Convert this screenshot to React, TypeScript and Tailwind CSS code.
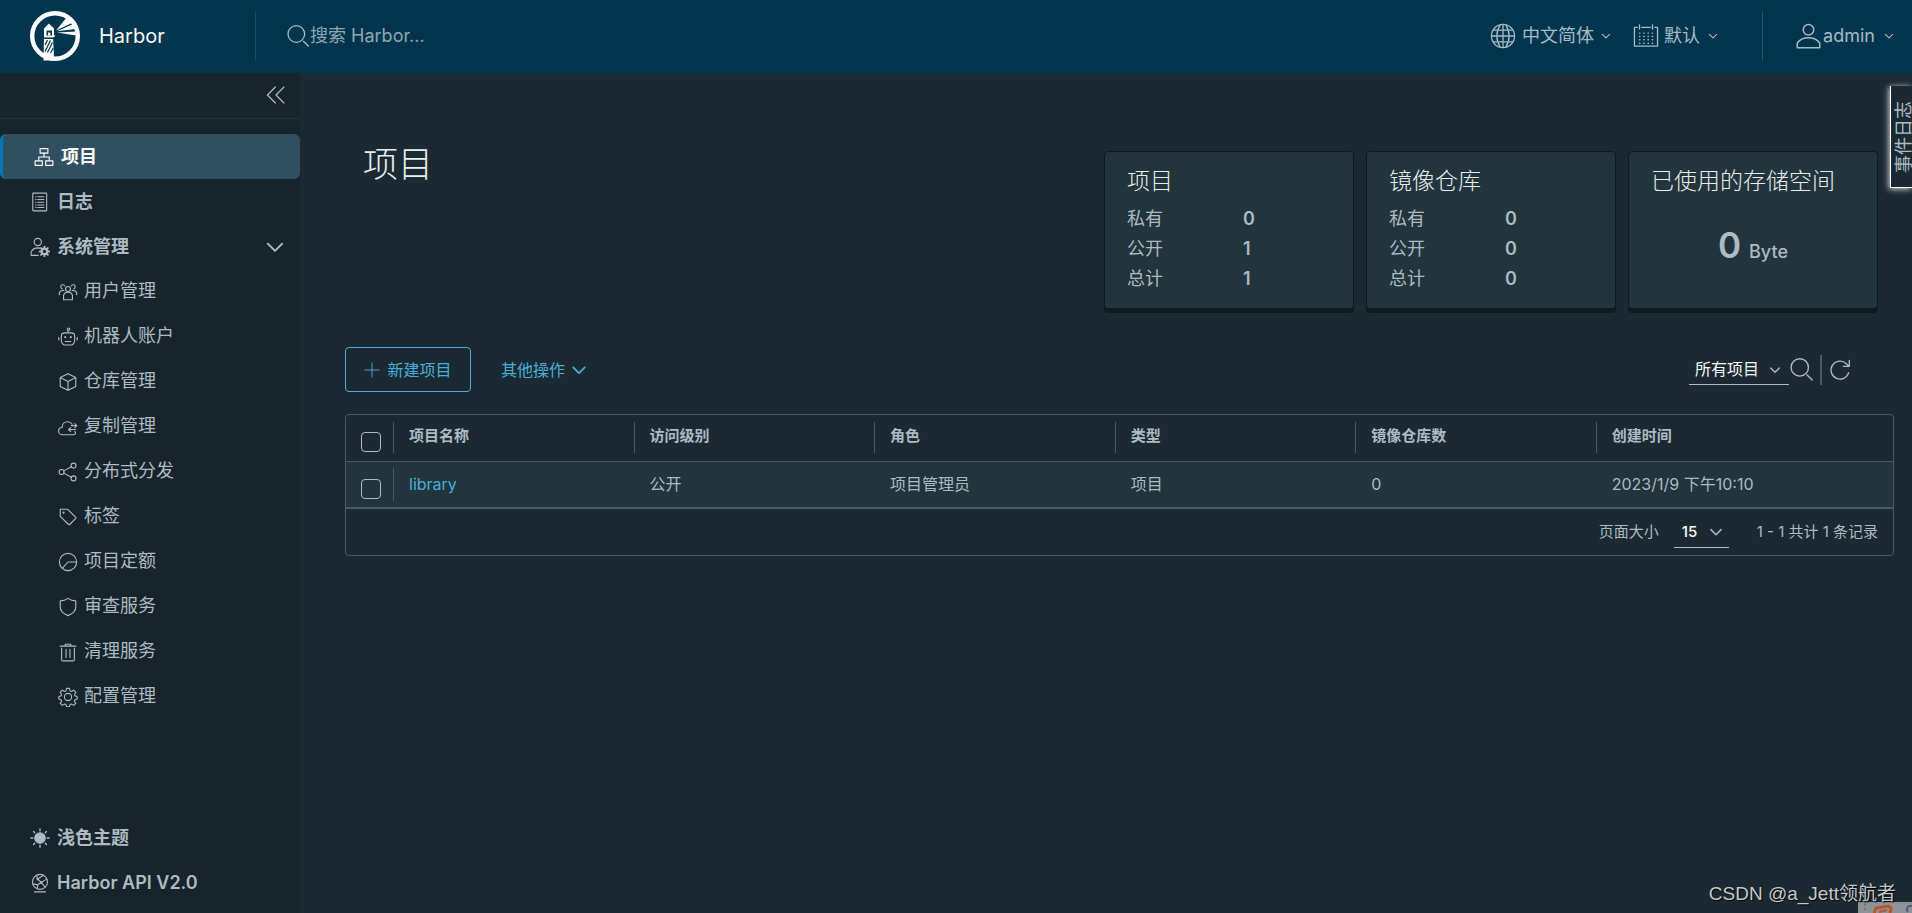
import type { ReactNode } from "react";

type IconProps = { className?: string; sw?: number; children?: ReactNode };

function Svg({ className = "size-5", sw = 2, children }: IconProps) {
  return (
    <svg
      viewBox="0 0 36 36"
      className={`shrink-0 ${className}`}
      fill="none"
      stroke="currentColor"
      strokeWidth={sw}
      strokeLinecap="round"
      strokeLinejoin="round"
      aria-hidden="true"
    >
      {children}
    </svg>
  );
}

const Chevron = ({ className, sw = 3 }: IconProps) => (
  <Svg className={className} sw={sw}>
    <path d="M5 12l13 13 13-13" />
  </Svg>
);

const SearchIcon = ({ className }: IconProps) => (
  <Svg className={className}>
    <circle cx="15.5" cy="15" r="12.5" />
    <path d="M26 26l7.5 7" />
  </Svg>
);

const icons = {
  projects: (
    <Svg>
      <rect x="11" y="3" width="14" height="8" />
      <rect x="2" y="25" width="13" height="8" />
      <rect x="21" y="25" width="13" height="8" />
      <path d="M18 11v7M8.5 24v-6h19v6" />
    </Svg>
  ),
  logs: (
    <Svg>
      <rect x="5" y="2" width="25" height="32" rx="1" />
      <path d="M10 8.500h1M10 13.500h1M10 18.500h1M10 23.500h1M10 28h1M14 8.500h11M14 13.500h11M14 18.500h11M14 23.500h11M14 28h11" />
    </Svg>
  ),
  admin: (
    <Svg>
      <circle cx="14" cy="9" r="6.500" />
      <path d="M15 33H2v-6c2.500-5 7-7.500 12-7.500l4 .5" />
      <circle cx="26" cy="26" r="5" strokeWidth="4" />
      <path d="M26 18.500v-1M26 34.500v-1M18.500 26h-1M34.500 26h-1M20.700 20.700l-.7-.7M31.300 31.300l.7.7M20.700 31.300l-.7.7M31.300 20.700l.7-.7" strokeWidth="3.500" />
    </Svg>
  ),
  users: (
    <Svg>
      <circle cx="18" cy="12.500" r="4.500" />
      <path d="M10 32v-8c1-4 4-5.500 8-5.500s7 1.500 8 5.500v8z" />
      <path d="M12 7c-1-3-7-3-7 1.500 0 2 1 3.500 3 4M24 7c1-3 7-3 7 1.500 0 2-1 3.500-3 4M2.500 23v-4c1-2.500 4-4 8-3.500M33.500 23v-4c-1-2.500-4-4-8-3.500" />
    </Svg>
  ),
  robot: (
    <Svg>
      <circle cx="19" cy="4" r="2.200" />
      <path d="M18 6.500V10M12 10.500h12c4 0 6 3 6 6v8c0 4-3 8-7 8H13c-4 0-7-4-7-8v-8c0-3 2-6 6-6zM1.500 18.500v5M34.500 18.500v5M13 26h10" />
      <path d="M13 18v.5M23 18v.5" strokeWidth="3.500" />
    </Svg>
  ),
  registry: (
    <Svg>
      <path d="M18 3l14 7v16l-14 7-14-7V10zM4 10l14 7 14-7M18 17v16" />
    </Svg>
  ),
  replication: (
    <Svg>
      <path d="M30 26c2.500 1.500 2 6-2 6H8c-4 0-7-3-7-6.500S4 19 7.500 18.500C7.500 12 12 8.500 17 8.500c4 0 7 2 8.500 4.500" />
      <path d="M24 15.500h9.500M30 12l4 3.500-4 3.500M32 22.500H19.500M23 19l-4 3.500 4 3.500" />
    </Svg>
  ),
  distribution: (
    <Svg>
      <circle cx="6.500" cy="18" r="4.500" />
      <circle cx="28" cy="6.500" r="4.500" />
      <circle cx="28" cy="29.500" r="4.500" />
      <path d="M10.500 16l13.500-7.500M10.500 20L24 27.500" />
    </Svg>
  ),
  tag: (
    <Svg>
      <path d="M4 4h13l15 14.500c1 1 1 1 0 2L21 31.500c-1 1-1 1-2 0L4 17z" />
      <circle cx="10" cy="10" r="1" />
    </Svg>
  ),
  quota: (
    <Svg>
      <circle cx="18" cy="18" r="15.500" />
      <path d="M33 18H18L8 29" />
    </Svg>
  ),
  shield: (
    <Svg>
      <path d="M18 2.500c4 3 9 4.500 14 4.500v11c0 7-5 12-14 15.500C9 30 4 25 4 18V7c5 0 10-1.500 14-4.500z" />
    </Svg>
  ),
  trash: (
    <Svg>
      <path d="M4 7.500h28M13 7V4h10v3M6.500 11v21c0 1 1 2 2 2h19c1 0 2-1 2-2V11M14.500 13v15M21.500 13v15" />
    </Svg>
  ),
  cog: (
    <Svg>
      <circle cx="18" cy="18" r="6.500" />
      <path d="M15.400 2.500h5.200l1.200 4.500 2.600 1.100 4-2.400 3.700 3.700-2.400 4 1.100 2.600 3.700 1v4.500l-3.900 1.300-1.100 2.600 2.500 4-3.700 3.700-4-2.500-2.600 1.100-1.200 3.800h-5l-1.200-3.800-2.600-1.100-4 2.500L4 29.400l2.500-4-1.100-2.600-3.900-1.300V17l3.900-1 1.100-2.600-2.500-4L7.700 5.700l4 2.400L14.300 7z" />
    </Svg>
  ),
  sun: (
    <Svg>
      <circle cx="18" cy="18" r="9.500" fill="currentColor" />
      <path d="M18 1.500v3.500M18 31v3.500M1.500 18H5M31 18h3.500M6.500 6.500l2 2M27.500 27.500l2 2M6.500 29.500l2-2M27.500 8.500l2-2" strokeWidth="2.500" />
    </Svg>
  ),
  api: (
    <Svg>
      <circle cx="18" cy="16" r="13.500" />
      <path d="M8 34h20M12 5l2 6 6 6 7 8M14 11l10-7M5 20l9 1 6-4 10-6M14 21l-1 7" />
      <circle cx="14" cy="11" r="1.500" />
      <circle cx="20" cy="17" r="1.500" />
    </Svg>
  ),
};

const Logo = () => (
  <svg viewBox="0 0 50 50" className="size-[50px] shrink-0" aria-hidden="true">
    <circle cx="25" cy="25" r="22.800" fill="none" stroke="#fff" strokeWidth="4.400" />
    <path fill="#fff" d="M26 19.500L37 6l7 5zM27 20.200l15.500-7 3 4.800zM27 21.500l19-1v4z" />
    <path fill="#fff" d="M19 12.500l5 5V24h.7v2H23l1 20.500-1 3h-9.500L14 26v-8.500z" />
    <path fill="#00364d" d="M16.500 19.500h5.500v5h-5.500z" />
    <path fill="#fff" d="M18 21.500h2.500v3H18z" />
    <path fill="#00364d" d="M14 26.500h10v1.500H14z" />
    <path stroke="#00364d" strokeWidth="1.200" d="M15 34l2.500-5M15 40.500l5.500-11M17.500 41.500l5-10M20.500 42l2.700-5" />
  </svg>
);

const adminItems = [
  { icon: icons.users, label: "用户管理" },
  { icon: icons.robot, label: "机器人账户" },
  { icon: icons.registry, label: "仓库管理" },
  { icon: icons.replication, label: "复制管理" },
  { icon: icons.distribution, label: "分布式分发" },
  { icon: icons.tag, label: "标签" },
  { icon: icons.quota, label: "项目定额" },
  { icon: icons.shield, label: "审查服务" },
  { icon: icons.trash, label: "清理服务" },
  { icon: icons.cog, label: "配置管理" },
];

function Header() {
  return (
    <header className="flex h-[73px] shrink-0 items-center bg-[#00364d] pb-px text-lg text-[#a6bac3]">
      <a href="#home" className="flex w-[255px] items-center gap-[19px] pl-[30px] text-xl text-[#fafafa]">
        <Logo />
        Harbor
      </a>
      <label className="flex h-[50px] flex-1 items-center border-l border-[#1f4e63] pl-[30px]">
        <SearchIcon className="size-6" />
        <input
          type="search"
          aria-label="搜索"
          placeholder="搜索 Harbor..."
          className="w-64 bg-transparent outline-none placeholder:text-[#8fa8b3]"
        />
      </label>
      <div className="flex h-[50px] items-center gap-[22px] border-r border-[#2b566a] pr-[44px]">
        <button type="button" className="flex items-center">
          <Svg className="mr-[6px] size-[26px]" sw={1.8}>
            <circle cx="18" cy="18" r="16" />
            <path d="M18 2v32M2.500 18h31M5 10h26M5 26h26M14 3c-6 9-6 21 0 30M22 3c6 9 6 21 0 30" />
          </Svg>
          中文简体
          <Chevron className="ml-[7px] size-[10px]" sw={4} />
        </button>
        <button type="button" className="flex items-center">
          <Svg className="mr-[5px] size-[26px]" sw={1.8}>
            <path d="M6 6H2v26h32V6h-4M12 6h12M9 2.500v6M27 2.500v6" />
            <path d="M9 14h19M9 18.700h19M9 23.300h19M9 28h19" strokeWidth="2" strokeDasharray="0.500 5.400" />
          </Svg>
          默认
          <Chevron className="ml-[8px] size-[10px]" sw={4} />
        </button>
      </div>
      <button type="button" className="flex items-center pl-[32px] pr-[18px]">
        <Svg className="mr-px size-[27px]">
          <circle cx="18" cy="9" r="7" />
          <path d="M3 33v-6c3-5 9-7.500 15-7.500S30 22 33 27v6z" />
        </Svg>
        admin
        <Chevron className="ml-[9px] size-[10px]" sw={4} />
      </button>
    </header>
  );
}

function Sidebar() {
  return (
    <nav className="flex w-[300px] shrink-0 flex-col bg-[#17242b] pb-2 text-lg text-[#adbbc4]">
      <div className="flex h-[46px] items-center justify-end border-b border-[#22313a] pr-[13px] pb-px">
        <button type="button" aria-label="收起">
          <Svg className="size-[22px]">
            <path d="M17 5L4 18l13 13M31 5L18 18l13 13" />
          </Svg>
        </button>
      </div>
      <a
        href="#projects"
        aria-current="page"
        className="mt-[15px] flex h-[45px] items-center gap-[7px] rounded-md border-l-[3px] border-[#0079b8] bg-[#324f62] pl-[31px] font-bold text-white"
      >
        {icons.projects}
        项目
      </a>
      <a href="#logs" className="flex h-[45px] items-center gap-[7px] pl-[30px] font-bold">
        {icons.logs}
        日志
      </a>
      <button type="button" className="flex h-[45px] items-center gap-[7px] pl-[30px] pr-[15px] font-bold">
        {icons.admin}
        系统管理
        <Chevron className="ml-auto size-5" sw={3.5} />
      </button>
      {adminItems.map((item) => (
        <a key={item.label} href="#admin" className="flex h-[45px] items-center gap-[6px] pl-[58px]">
          {item.icon}
          <span className="pb-[2px]">{item.label}</span>
        </a>
      ))}
      <button type="button" className="mt-auto flex h-[45px] items-center gap-[7px] pl-[30px] font-bold">
        {icons.sun}
        浅色主题
      </button>
      <a href="#api" className="flex h-[45px] items-center gap-[7px] pl-[30px] font-semibold">
        {icons.api}
        Harbor API V2.0
      </a>
    </nav>
  );
}

function Card({ title, children }: { title: string; children: ReactNode }) {
  return (
    <section className="h-[158px] w-[250px] rounded border border-[#10191e] bg-[#22343c] px-[22px] pt-[11px] shadow-[0_4px_0_#10191e]">
      <h2 className="text-[23px] leading-9 font-light whitespace-nowrap text-[#eaedf0]">{title}</h2>
      {children}
    </section>
  );
}

function Counts({ values }: { values: number[] }) {
  return (
    <dl className="mt-[5px] grid grid-cols-[116px_1fr] text-lg leading-[30px]">
      {["私有", "公开", "总计"].map((label, i) => (
        <div key={label} className="contents">
          <dt>{label}</dt>
          <dd className="font-semibold">{values[i]}</dd>
        </div>
      ))}
    </dl>
  );
}

const columns = ["项目名称", "访问级别", "角色", "类型", "镜像仓库数", "创建时间"];
const row = ["公开", "项目管理员", "项目", "0", "2023/1/9 下午10:10"];

function Box({ label }: { label: string }) {
  return (
    <input
      type="checkbox"
      aria-label={label}
      className="mt-[9px] ml-[15px] block size-5 appearance-none rounded border border-[#adbbc4]"
    />
  );
}

function ProjectTable() {
  return (
    <div className="mt-[22px] rounded border border-[#495a67]">
      <table className="w-full table-fixed border-collapse text-left">
        <colgroup>
          <col className="w-[47px]" />
          <col className="w-[15.55%]" />
          <col className="w-[15.55%]" />
          <col className="w-[15.55%]" />
          <col className="w-[15.55%]" />
          <col className="w-[15.55%]" />
          <col />
        </colgroup>
        <thead>
          <tr className="h-[46px] border-b border-[#495a67] text-[15px]">
            <th className="p-0">
              <Box label="全选" />
            </th>
            {columns.map((c) => (
              <th key={c} className="p-0 font-bold">
                <div className="flex h-[31px] border-l border-[#495a67] pl-[15px] leading-7">{c}</div>
              </th>
            ))}
          </tr>
        </thead>
        <tbody>
          <tr className="h-[47px] border-b-2 border-[#495a67] bg-[#22343c]">
            <td className="p-0">
              <Box label="选择 library" />
            </td>
            <td className="p-0">
              <div className="flex h-[33px] items-center border-l border-[#495a67] pl-[15px] text-[#49afd9]">
                <a href="#library">library</a>
              </div>
            </td>
            {row.map((v) => (
              <td key={v} className="p-0 pl-4">
                {v}
              </td>
            ))}
          </tr>
        </tbody>
      </table>
      <div className="flex h-[46px] items-center justify-end pr-[15px] text-[15px]">
        <label htmlFor="page-size">页面大小</label>
        <div className="relative mr-[28px] ml-[15px] flex items-center">
          <select
            id="page-size"
            className="h-[31px] w-[55px] appearance-none border-b border-[#adbbc4] bg-transparent pt-[2px] pl-2 font-medium text-white"
          >
            <option>15</option>
          </select>
          <Chevron className="pointer-events-none absolute right-[6px] size-[14px]" sw={4} />
        </div>
        1 - 1 共计 1 条记录
      </div>
    </div>
  );
}

export default function App() {
  return (
    <div className="relative flex min-h-screen flex-col overflow-hidden bg-[#1b2a32] font-['Inter','Noto_Sans_CJK_SC',sans-serif] text-base text-[#adbbc4]">
      <Header />
      <div className="flex flex-1">
        <Sidebar />
        <main className="min-w-0 flex-1 pt-[70px] pr-[18px] pl-[45px]">
          <div className="flex justify-between pr-4 pl-[18px]">
            <h1 className="text-[35px] leading-[42px] font-light text-[#eaedf0]">项目</h1>
            <div className="mt-2 flex gap-3">
              <Card title="项目">
                <Counts values={[0, 1, 1]} />
              </Card>
              <Card title="镜像仓库">
                <Counts values={[0, 0, 0]} />
              </Card>
              <Card title="已使用的存储空间">
                <p className="mt-[22px] flex items-baseline justify-center gap-2 text-[35px] leading-[48px] font-semibold">
                  0 <span className="text-lg font-medium">Byte</span>
                </p>
              </Card>
            </div>
          </div>

          <div className="mt-[38px] flex h-[45px] items-center">
            <button
              type="button"
              className="flex h-[45px] w-[126px] items-center justify-center gap-[7px] rounded border border-[#49afd9] text-[#49afd9]"
            >
              <Svg className="size-4">
                <path d="M18 2v32M2 18h32" />
              </Svg>
              新建项目
            </button>
            <button type="button" className="ml-[30px] flex items-center gap-[6px] text-[#49afd9]">
              其他操作
              <Chevron className="size-4" sw={4} />
            </button>
            <div className="mr-[42px] ml-auto flex items-center">
              <div className="relative flex items-center">
                <select
                  aria-label="项目范围"
                  className="h-[30px] w-[100px] appearance-none border-b border-[#adbbc4] bg-transparent pl-[6px] text-[#fafafa]"
                >
                  <option>所有项目</option>
                </select>
                <Chevron className="pointer-events-none absolute right-2 size-3" sw={4} />
              </div>
              <button type="button" aria-label="搜索">
                <SearchIcon className="size-[25px]" />
              </button>
              <span className="mx-[6px] h-[30px] w-[2px] bg-[#495a67]" />
              <button type="button" aria-label="刷新">
                <Svg className="size-6">
                  <path d="M31 22A13.500 13.500 0 1 1 27.500 8.500L31 12M32 3.500V12.500H23" />
                </Svg>
              </button>
            </div>
          </div>
          <ProjectTable />
        </main>
      </div>

      <button
        type="button"
        className="absolute top-[86px] right-0 flex h-[102px] w-[22px] items-center border-b border-l border-white bg-[#1b2a32] pl-px text-lg shadow-[-1px_1px_6px_#e0e0e0]"
      >
        <span className="rotate-180 leading-6 [text-orientation:sideways] [writing-mode:vertical-rl]">事件日志</span>
      </button>

      <div className="absolute right-0 bottom-0 h-[11px] w-[54px] overflow-hidden bg-[#8c9498]">
        <svg viewBox="0 0 54 11" className="h-[11px] w-[54px]" aria-hidden="true">
          <path d="M6 2.500h2M6 7h2" stroke="#6d7579" strokeWidth="2" />
          <path d="M16 11l2-5 12-2 3 2-1 5" fill="none" stroke="#bf5128" strokeWidth="3" />
          <path d="M21 10l8-2" stroke="#bf5128" strokeWidth="2" />
          <path d="M54 4c-5-1-6 3-4 6" fill="none" stroke="#4a5f80" strokeWidth="2" />
        </svg>
      </div>
      <p className="absolute right-4 bottom-[5px] font-['Liberation_Sans','Noto_Sans_CJK_SC',sans-serif] text-[19px] leading-7 text-[#c3c8cb] [text-shadow:1px_1px_1px_#000]">
        CSDN @a_Jett领航者
      </p>
    </div>
  );
}
